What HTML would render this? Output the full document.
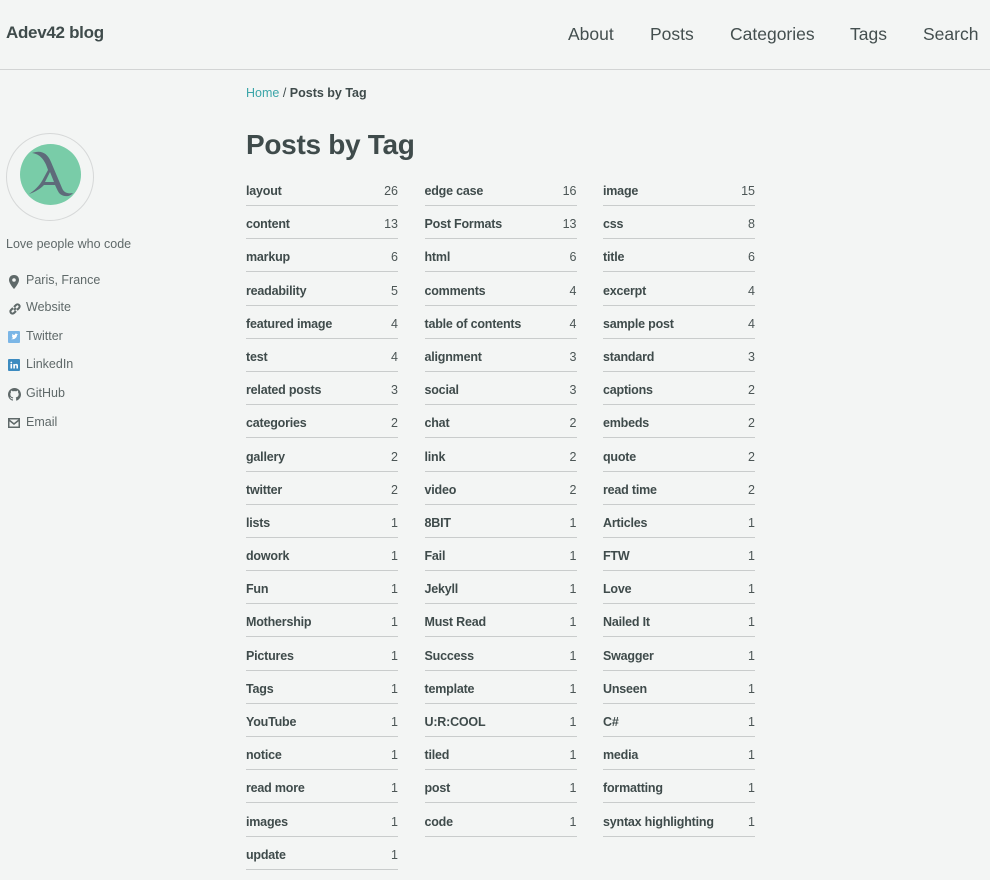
<!DOCTYPE html>
<html><head><meta charset="utf-8"><style>
body{margin:0;background:#f3f5f4;font-family:"Liberation Sans",sans-serif;color:#3f4b4b;width:990px;height:880px;overflow:hidden;position:relative}
.hdr{position:absolute;left:0;top:0;width:990px;height:69px;border-bottom:1px solid #d2d4d4}
.brand{position:absolute;left:6px;top:23px;font-size:17px;font-weight:bold;letter-spacing:-0.3px}
.nav a{position:absolute;top:24px;font-size:17.5px;color:#444f4f;text-decoration:none}
.crumb{position:absolute;left:246px;top:86px;font-size:12.5px}
.crumb a{color:#3ba5a8;text-decoration:none}
h1{position:absolute;left:246px;top:129px;margin:0;font-size:28px;font-weight:bold;letter-spacing:-0.3px}
.av{position:absolute;left:6px;top:133px;width:86px;height:86px;border:1px solid #d6d8d8;border-radius:50%}
.av .in{position:absolute;left:13px;top:10px;width:61px;height:61px;border-radius:50%;background:#79cca8}
.bio{position:absolute;left:6px;top:237px;font-size:12.5px;color:#5f6969}
.li{position:absolute;left:8px;font-size:12.5px;color:#5f6969}
.li svg{position:absolute;left:0;top:2px}
.li span{position:absolute;left:18px;top:0;white-space:nowrap}
.grid{position:absolute;left:246px;top:178px;display:grid;grid-template-columns:152px 152px 152px;column-gap:26.5px;grid-auto-rows:33.2px}
.c{height:28px;box-sizing:border-box;border-bottom:1px solid #c9cccc;display:flex;justify-content:space-between;font-size:12.5px;line-height:17px;padding-top:5px}
.c b{font-weight:bold;letter-spacing:-0.2px}
.c i{font-style:normal;color:#4c5656}
</style></head><body>
<div class="hdr"><div class="brand">Adev42 blog</div>
<div class="nav"><a style="left:568px">About</a><a style="left:650px">Posts</a><a style="left:730px">Categories</a><a style="left:850px">Tags</a><a style="left:923px">Search</a></div></div>
<div class="crumb"><a>Home</a> / <b>Posts by Tag</b></div>
<h1>Posts by Tag</h1>
<div class="av"><div class="in"><svg width="61" height="61" viewBox="0 0 61 61"><path d="M12 9 C20 6 27 8 31 18 L42 44 C44 49 48 50 53 49 C50 53 44 53 40 50 C38 48 37 45 35 41 L24 41 C20 45 15 48 9 50 C15 46 19 42 22 37 L28 26 C25 16 20 10 12 9 Z M25 38 L34 38 L30 28 Z" fill="#5e6b7a"/></svg></div></div>
<div class="bio">Love people who code</div>
<div class="li" style="top:273px"><svg width="12" height="14" viewBox="0 0 12 14"><path d="M6 0C2.7 0 1 2.4 1 5c0 3.5 5 9 5 9s5-5.5 5-9C11 2.4 9.3 0 6 0z" fill="#5f6969"/><circle cx="6" cy="5" r="1.8" fill="#f3f5f4"/></svg><span>Paris, France</span></div>
<div class="li" style="top:300px"><svg width="14" height="14" viewBox="0 0 14 14"><path d="M6 8l2-2M5 6L3 8a2 2 0 003 3l2-2M9 8l2-2a2 2 0 00-3-3L6 5" stroke="#5f6969" stroke-width="2" fill="none"/></svg><span>Website</span></div>
<div class="li" style="top:329px"><svg width="12" height="12" viewBox="0 0 12 12"><rect width="12" height="12" rx="1" fill="#7bb6e6"/><path d="M3 8c3 1 6-1 6-4l1-1-1 0c-1-1-3 0-2 1-2 0-3-1-3-1 0 1 0 2 1 2H4c0 1 1 2 1 2-1 1-2 1-2 1z" fill="#fff"/></svg><span>Twitter</span></div>
<div class="li" style="top:357px"><svg width="12" height="12" viewBox="0 0 12 12"><rect width="12" height="12" rx="1" fill="#3c8bc0"/><path d="M2.5 5h1.6v4.5H2.5zM5.3 5h1.5v.7c.4-.6 1-.8 1.6-.8 1.1 0 1.6.7 1.6 2v2.6H8.4V7.2c0-.6-.2-1-.7-1s-.8.4-.8 1v2.3H5.3z" fill="#fff"/><circle cx="3.3" cy="3.5" r=".9" fill="#fff"/></svg><span>LinkedIn</span></div>
<div class="li" style="top:386px"><svg width="13" height="13" viewBox="0 0 16 16"><path d="M8 0C3.6 0 0 3.6 0 8c0 3.5 2.3 6.5 5.5 7.6.4.1.5-.2.5-.4v-1.4c-2.2.5-2.7-1-2.7-1-.4-.9-.9-1.2-.9-1.2-.7-.5.1-.5.1-.5.8.1 1.2.8 1.2.8.7 1.2 1.9.9 2.3.7.1-.5.3-.9.5-1.1-1.8-.2-3.6-.9-3.6-4 0-.9.3-1.6.8-2.1-.1-.2-.4-1 .1-2.1 0 0 .7-.2 2.2.8.6-.2 1.3-.3 2-.3s1.4.1 2 .3c1.5-1 2.2-.8 2.2-.8.4 1.1.2 1.900.1 2.1.5.6.8 1.3.8 2.1 0 3.1-1.9 3.7-3.6 3.9.3.3.5.8.5 1.5v2.2c0 .2.1.5.6.4C13.7 14.5 16 11.5 16 8c0-4.4-3.6-8-8-8z" fill="#5f6969"/></svg><span>GitHub</span></div>
<div class="li" style="top:415px"><svg width="12" height="12" viewBox="0 0 12 12"><rect x=".75" y="1.75" width="10.5" height="8.5" fill="none" stroke="#5f6969" stroke-width="1.5"/><path d="M1 3l5 4 5-4" fill="none" stroke="#5f6969" stroke-width="1.5"/></svg><span>Email</span></div>
<div class="grid">
<div class="c"><b>layout</b><i>26</i></div><div class="c"><b>edge case</b><i>16</i></div><div class="c"><b>image</b><i>15</i></div>
<div class="c"><b>content</b><i>13</i></div><div class="c"><b>Post Formats</b><i>13</i></div><div class="c"><b>css</b><i>8</i></div>
<div class="c"><b>markup</b><i>6</i></div><div class="c"><b>html</b><i>6</i></div><div class="c"><b>title</b><i>6</i></div>
<div class="c"><b>readability</b><i>5</i></div><div class="c"><b>comments</b><i>4</i></div><div class="c"><b>excerpt</b><i>4</i></div>
<div class="c"><b>featured image</b><i>4</i></div><div class="c"><b>table of contents</b><i>4</i></div><div class="c"><b>sample post</b><i>4</i></div>
<div class="c"><b>test</b><i>4</i></div><div class="c"><b>alignment</b><i>3</i></div><div class="c"><b>standard</b><i>3</i></div>
<div class="c"><b>related posts</b><i>3</i></div><div class="c"><b>social</b><i>3</i></div><div class="c"><b>captions</b><i>2</i></div>
<div class="c"><b>categories</b><i>2</i></div><div class="c"><b>chat</b><i>2</i></div><div class="c"><b>embeds</b><i>2</i></div>
<div class="c"><b>gallery</b><i>2</i></div><div class="c"><b>link</b><i>2</i></div><div class="c"><b>quote</b><i>2</i></div>
<div class="c"><b>twitter</b><i>2</i></div><div class="c"><b>video</b><i>2</i></div><div class="c"><b>read time</b><i>2</i></div>
<div class="c"><b>lists</b><i>1</i></div><div class="c"><b>8BIT</b><i>1</i></div><div class="c"><b>Articles</b><i>1</i></div>
<div class="c"><b>dowork</b><i>1</i></div><div class="c"><b>Fail</b><i>1</i></div><div class="c"><b>FTW</b><i>1</i></div>
<div class="c"><b>Fun</b><i>1</i></div><div class="c"><b>Jekyll</b><i>1</i></div><div class="c"><b>Love</b><i>1</i></div>
<div class="c"><b>Mothership</b><i>1</i></div><div class="c"><b>Must Read</b><i>1</i></div><div class="c"><b>Nailed It</b><i>1</i></div>
<div class="c"><b>Pictures</b><i>1</i></div><div class="c"><b>Success</b><i>1</i></div><div class="c"><b>Swagger</b><i>1</i></div>
<div class="c"><b>Tags</b><i>1</i></div><div class="c"><b>template</b><i>1</i></div><div class="c"><b>Unseen</b><i>1</i></div>
<div class="c"><b>YouTube</b><i>1</i></div><div class="c"><b>U:R:COOL</b><i>1</i></div><div class="c"><b>C#</b><i>1</i></div>
<div class="c"><b>notice</b><i>1</i></div><div class="c"><b>tiled</b><i>1</i></div><div class="c"><b>media</b><i>1</i></div>
<div class="c"><b>read more</b><i>1</i></div><div class="c"><b>post</b><i>1</i></div><div class="c"><b>formatting</b><i>1</i></div>
<div class="c"><b>images</b><i>1</i></div><div class="c"><b>code</b><i>1</i></div><div class="c"><b>syntax highlighting</b><i>1</i></div>
<div class="c"><b>update</b><i>1</i></div>
</div>
</body></html>
